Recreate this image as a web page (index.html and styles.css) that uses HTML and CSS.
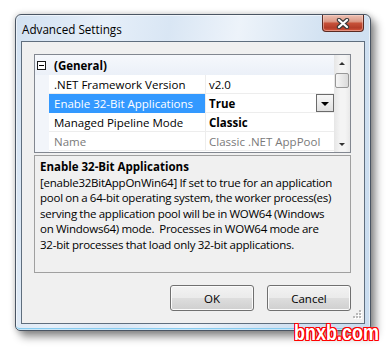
FILE: index.html
```html
<!DOCTYPE html>
<html>
<head>
<meta charset="utf-8">
<link rel="stylesheet" href="styles.css">
</head>
<body>
<div class="window">
  <div class="titlebar">
    <div class="title">Advanced Settings</div>
    <div class="close">
      <svg width="14" height="11" viewBox="0 0 14 11">
        <path d="M3 2 L11 9 M11 2 L3 9" stroke="#3b3b3b" stroke-width="4.4" stroke-linecap="round" fill="none"/>
        <path d="M3 2 L11 9 M11 2 L3 9" stroke="#ffffff" stroke-width="2.2" stroke-linecap="round" fill="none"/>
      </svg>
    </div>
  </div>
  <div class="client">
    <div class="grid">
      <div class="rows">
        <div class="row cat">
          <div class="gutter"><span class="minus"></span></div>
          <div class="catname">(General)</div>
        </div>
        <div class="row">
          <div class="gutter"></div>
          <div class="name">.NET Framework Version</div>
          <div class="val">v2.0</div>
        </div>
        <div class="row sel">
          <div class="gutter"></div>
          <div class="name">Enable 32-Bit Applications</div>
          <div class="val bold"><span>True</span><span class="dd"><span class="tri-down"></span></span></div>
        </div>
        <div class="row">
          <div class="gutter"></div>
          <div class="name">Managed Pipeline Mode</div>
          <div class="val bold">Classic</div>
        </div>
        <div class="row dim">
          <div class="gutter"></div>
          <div class="name">Name</div>
          <div class="val">Classic .NET AppPool</div>
        </div>
        <div class="row-fill">
          <div class="gutter"></div>
        </div>
      </div>
      <div class="vscroll">
        <div class="sbtn"><span class="tri-up"></span></div>
        <div class="thumb"></div>
        <div class="track"></div>
        <div class="sbtn"><span class="tri-down small"></span></div>
      </div>
    </div>
    <div class="desc">
      <div class="desc-title">Enable 32-Bit Applications</div>
      <div class="desc-text">[enable32BitAppOnWin64] If set to true for an application<br>pool on a 64-bit operating system, the worker process(es)<br>serving the application pool will be in WOW64 (Windows<br>on Windows64) mode.&nbsp; Processes in WOW64 mode are<br>32-bit processes that load only 32-bit applications.</div>
    </div>
    <div class="buttons">
      <button class="btn">OK</button>
      <button class="btn">Cancel</button>
    </div>
    <svg class="grip" width="11" height="11" viewBox="0 0 11 11">
      <g fill="#ffffff">
        <rect x="9" y="1" width="2" height="2"/>
        <rect x="6" y="4" width="2" height="2"/><rect x="9" y="4" width="2" height="2"/>
        <rect x="3" y="7" width="2" height="2"/><rect x="6" y="7" width="2" height="2"/><rect x="9" y="7" width="2" height="2"/>
      </g>
      <g fill="#b8b8b8">
        <rect x="8" y="0" width="2" height="2"/>
        <rect x="5" y="3" width="2" height="2"/><rect x="8" y="3" width="2" height="2"/>
        <rect x="2" y="6" width="2" height="2"/><rect x="5" y="6" width="2" height="2"/><rect x="8" y="6" width="2" height="2"/>
      </g>
    </svg>
  </div>
</div>
<div class="watermark">bnxb.com</div>
</body>
</html>
```
FILE: styles.css
```css
html, body {
  margin: 0;
  padding: 0;
}
body {
  width: 389px;
  height: 349px;
  background: #ffffff;
  font-family: "Segoe UI", "Open Sans", sans-serif;
  font-size: 11.5px;
  color: #000;
  position: relative;
  overflow: hidden;
}

.window {
  margin: 14px 0 0 15px;
  width: 356px;
  height: 317px;
  box-sizing: border-box;
  border: 1px solid #4a5563;
  border-radius: 6px 6px 5px 5px;
  background: linear-gradient(100deg, #d2e1f1 0%, #e6eff9 22%, #d9e6f4 38%, #edf3fa 55%, #d4e3f2 75%, #c9dcef 100%);
  box-shadow: inset 0 0 0 1px rgba(255,255,255,0.55), inset 0 -2px 0 #86cbf0, 0 0 6px rgba(0,0,0,0.22), 5px 6px 9px rgba(0,0,0,0.42);
  display: flex;
  flex-direction: column;
}

.titlebar {
  height: 26px;
  flex: none;
  display: flex;
  align-items: flex-start;
}
.title {
  flex: 1;
  align-self: center;
  padding-left: 6px;
  padding-top: 1px;
  font-size: 11.7px;
}
.close {
  width: 42px;
  height: 17px;
  margin-right: 6px;
  box-sizing: border-box;
  border: 1px solid #5a2a22;
  border-top: none;
  border-radius: 0 0 4px 4px;
  background: linear-gradient(#ecc0b3 0%, #dc9a87 40%, #c65139 52%, #b33d29 80%, #d6573d 100%);
  box-shadow: inset 0 0 0 1px rgba(255,220,210,0.45);
  display: flex;
  align-items: center;
  justify-content: center;
}

.client {
  margin: 0 5px;
  height: 283px;
  flex: none;
  box-sizing: border-box;
  border: 1px solid #5f6e7e;
  background: #f0f0f0;
  padding: 12px 13px 12px 12px;
  display: flex;
  flex-direction: column;
  position: relative;
}

.grid {
  height: 99px;
  flex: none;
  box-sizing: border-box;
  border: 1px solid #828790;
  background: #ffffff;
  display: flex;
}
.rows {
  flex: 1;
  display: flex;
  flex-direction: column;
  overflow: hidden;
}
.row {
  height: 19px;
  flex: none;
  display: flex;
}
.row.cat {
  height: 20px;
  background: linear-gradient(#f6f8fc, #ebf0f8);
}
.row-fill {
  flex: 1;
  display: flex;
}
.gutter {
  width: 14px;
  flex: none;
  background: #f2f5fa;
  display: flex;
  align-items: center;
}
.row.cat .gutter {
  background: transparent;
}
.minus {
  width: 9px;
  height: 9px;
  margin-left: 2px;
  margin-top: 1px;
  box-sizing: border-box;
  border: 1px solid #1a1a1a;
  position: relative;
  background: #fff;
}
.minus::after {
  content: "";
  position: absolute;
  left: 1px;
  top: 3px;
  width: 5px;
  height: 1px;
  background: #000;
}
.catname {
  padding-left: 5px;
  display: flex;
  align-items: center;
  font-weight: bold;
}
.name {
  width: 156px;
  flex: none;
  box-sizing: border-box;
  padding-left: 5px;
  display: flex;
  align-items: center;
  border-bottom: 1px solid #ededed;
  white-space: nowrap;
  overflow: hidden;
}
.val {
  flex: 1;
  border-left: 1px solid #ededed;
  border-bottom: 1px solid #ededed;
  padding-left: 3px;
  display: flex;
  align-items: center;
  justify-content: space-between;
  white-space: nowrap;
}
.bold {
  font-weight: bold;
}
.row.sel .name {
  background: #3399ff;
  color: #ffffff;
  border-bottom-color: #3399ff;
}
.row.dim .name,
.row.dim .val {
  color: #7a7a7a;
}
.dd {
  width: 18px;
  height: 18px;
  box-sizing: border-box;
  border: 1px solid #6b6b6b;
  background: linear-gradient(#f7f7f7, #e0e0e0);
  display: flex;
  align-items: center;
  justify-content: center;
}
.tri-down {
  width: 0;
  height: 0;
  border-left: 4px solid transparent;
  border-right: 4px solid transparent;
  border-top: 4px solid #000;
  margin-top: 1px;
}
.tri-down.small {
  border-left-width: 3px;
  border-right-width: 3px;
  border-top: 3px solid #333;
}
.tri-up {
  width: 0;
  height: 0;
  border-left: 3px solid transparent;
  border-right: 3px solid transparent;
  border-bottom: 3px solid #333;
}

.vscroll {
  width: 16px;
  flex: none;
  display: flex;
  flex-direction: column;
  background: linear-gradient(90deg, #e6e6e6, #f4f4f4 40%, #f4f4f4 70%, #e9e9e9);
}
.sbtn {
  height: 17px;
  flex: none;
  display: flex;
  align-items: center;
  justify-content: center;
}
.thumb {
  height: 15px;
  flex: none;
  margin: 1px 1px 0 1px;
  box-sizing: border-box;
  border: 1px solid #979797;
  border-radius: 2px;
  background: linear-gradient(90deg, #f6f6f6, #e7e7e7 55%, #dadada);
}
.track {
  flex: 1;
}

.desc {
  margin-top: 2px;
  height: 118px;
  flex: none;
  box-sizing: border-box;
  border: 1px solid #a0a0a0;
  padding: 3px 5px;
  line-height: 15.6px;
  white-space: nowrap;
  overflow: hidden;
}
.desc-title {
  font-weight: bold;
}
.desc-text {
  letter-spacing: -0.24px;
  word-spacing: -0.3px;
}

.buttons {
  margin-top: 12px;
  display: flex;
  justify-content: flex-end;
  gap: 13px;
}
.btn {
  width: 84px;
  height: 26px;
  box-sizing: border-box;
  border: 1px solid #707070;
  border-radius: 3px;
  background: linear-gradient(#f2f2f2 0%, #ebebeb 48%, #dddddd 52%, #cfcfcf 100%);
  box-shadow: inset 0 0 0 1px #fbfbfb;
  font-family: "Segoe UI", "Open Sans", sans-serif;
  font-size: 11.5px;
  color: #000;
  padding: 0;
}

.grip {
  position: absolute;
  right: 2px;
  bottom: 2px;
}

.watermark {
  position: absolute;
  left: 294px;
  top: 321px;
  font-family: "Liberation Sans", Arial, sans-serif;
  font-weight: bold;
  font-size: 18px;
  line-height: 20px;
  color: #ffffff;
  text-shadow: 1px 0 0 #ff0000, -1px 0 0 #ff0000, 0 1px 0 #ff0000, 0 -1px 0 #ff0000,
               1px 1px 0 #ff0000, -1px -1px 0 #ff0000, 1px -1px 0 #ff0000, -1px 1px 0 #ff0000;
  transform: scaleY(1.2);
  transform-origin: 0 0;
}
```
